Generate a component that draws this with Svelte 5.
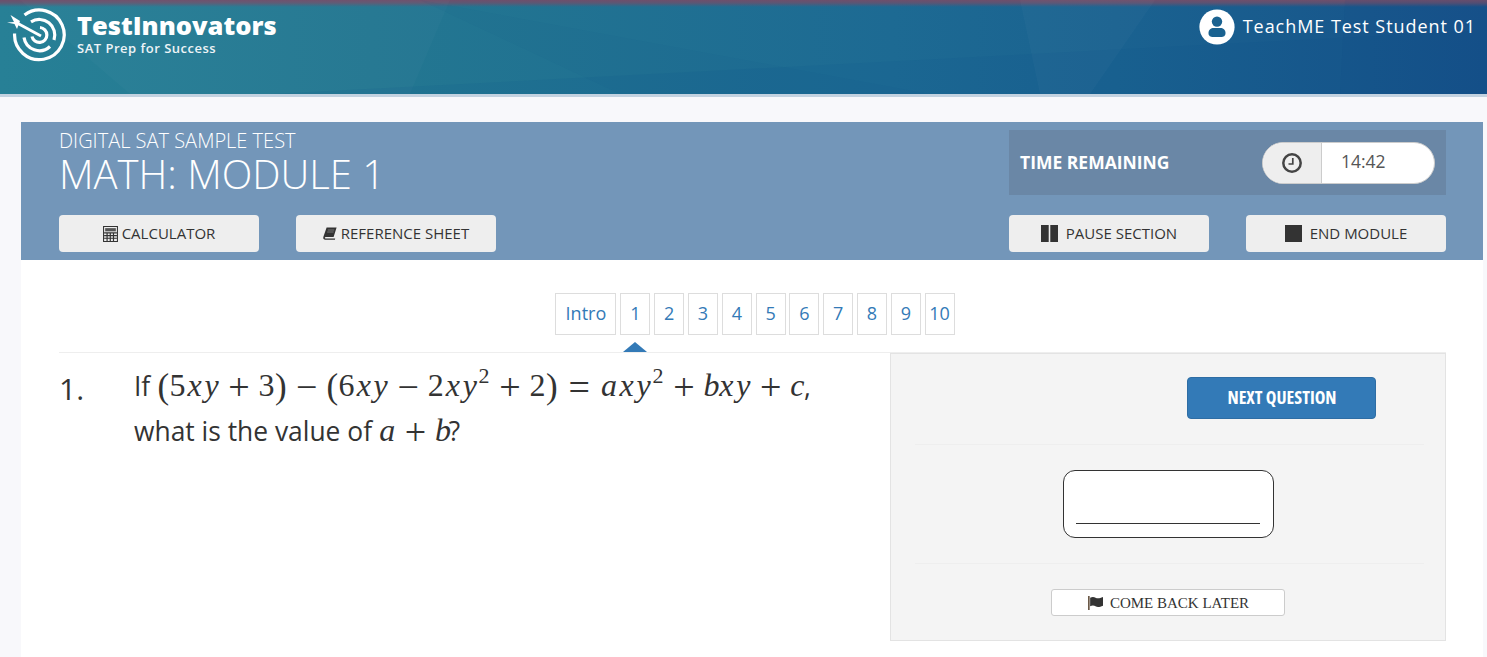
<script>
  const tabs = ['1','2','3','4','5','6','7','8','9','10'];
  const X = { t: 'x', w: .572, k: 'mi' };
  const Y = { t: 'y', w: .49, k: 'mi' };
  const num = (t) => ({ t, w: .5, k: 'mn' });
  const par = (t) => ({ t, w: .389, k: 'mp' });
  const bin = (t) => ({ t, w: 1.222, k: 'mo' });
  const sq = { t: '2', w: .4, k: 'sup' };
  const mi = (t, w) => ({ t, w, k: 'mi' });
  const line1 = [par('('),num('5'),X,Y,bin('+'),num('3'),par(')'),bin('−'),par('('),num('6'),X,Y,bin('−'),num('2'),X,Y,sq,bin('+'),num('2'),par(')'),
    { t:'=', w:1.334, k:'mo' },mi('a',.529),X,Y,sq,bin('+'),mi('b',.429),X,Y,bin('+'),mi('c',.433)];
  const line2 = [mi('a',.529),bin('+'),mi('b',.429)];
  const EM = 32;
</script>

{#snippet math(tokens)}
  <span class="math">{#each tokens as tok}<span class={tok.k} style="width:{tok.w * EM}px">{tok.t}</span>{/each}</span>
{/snippet}

<div class="page">
  <header class="top">
    <svg class="facets" viewBox="0 0 1487 94" preserveAspectRatio="none" aria-hidden="true">
      <polygon points="20,0 130,94 410,94 450,0" fill="#fff" opacity=".02"/>
      <polygon points="270,94 1487,30 1487,94" fill="#0b4f8c" opacity=".1"/>
      <polygon points="1020,0 1040,94 1090,94 1155,0" fill="#fff" opacity=".025"/>
      <polygon points="420,0 620,94 930,94" fill="#0b4f8c" opacity=".05"/>
      <polygon points="1345,0 1487,0 1487,94 1340,94" fill="#0d3f80" opacity=".08"/>
    </svg>
    <div class="brand">
      <svg class="logo" viewBox="7 7 62 62" aria-hidden="true">
        <g fill="none" stroke="#fff" stroke-width="3.2">
          <path d="M24.5 15 A24.8 24.8 0 1 1 14.6 33.5"/>
          <path d="M31 21.8 A15.6 15.6 0 0 1 54 40"/>
          <path d="M24 37.5 A15.6 15.6 0 0 0 50 46.5"/>
          <path d="M40 27.5 A7.5 7.5 0 1 1 32 36.5"/>
        </g>
        <path d="M17 23 L41 36" stroke="#fff" stroke-width="2.8" fill="none"/>
        <path d="M6.5 22.5 L14 22 L10.5 15 L20 21 L17 29 L14.5 24 Z" fill="#fff"/>
      </svg>
      <div class="brand-text">
        <div class="brand-name">TestInnovators</div>
        <div class="brand-sub">SAT Prep for Success</div>
      </div>
    </div>
    <div class="user">
      <svg class="avatar" viewBox="0 0 36 36" aria-hidden="true">
        <circle cx="18" cy="18" r="17.6" fill="#fff"/>
        <circle cx="18" cy="12.6" r="5.2" fill="#1a6290"/>
        <path d="M9.5 24 C9.5 20.5 12 19 14.5 19 H21.5 C24 19 26.5 20.5 26.5 24 C26.5 27 24.5 28 22 28 H14 C11.5 28 9.5 27 9.5 24 Z" fill="#1a6290"/>
      </svg>
      <span class="user-name">TeachME Test Student 01</span>
    </div>
  </header>

  <main class="main">
    <section class="card">
      <div class="head">
        <div class="head-row first">
          <div class="titles">
            <div class="eyebrow">DIGITAL SAT SAMPLE TEST</div>
            <h1>MATH: MODULE 1</h1>
          </div>
          <div class="timer">
            <strong>TIME REMAINING</strong>
            <div class="pill">
              <span class="pill-icon">
                <svg viewBox="0 0 20 20" width="20" height="20" aria-hidden="true">
                  <circle cx="10" cy="10" r="8.7" fill="none" stroke="#444" stroke-width="2.5"/>
                  <path d="M10.8 5 V11 H6.5" fill="none" stroke="#444" stroke-width="1.7"/>
                </svg>
              </span>
              <span class="pill-time">14:42</span>
            </div>
          </div>
        </div>
        <div class="head-row">
          <div class="btns">
            <button class="tool">
              <svg viewBox="0 0 14 15" width="15" height="16" aria-hidden="true">
                <path d="M.5.5h13v14H.5z" fill="none" stroke="#333"/>
                <path d="M2 2h10v3H2z" fill="#555"/>
                <path d="M1 6.5h12M1 9h12M1 11.5h12M3.8 6v8M6.8 6v8M9.8 6v8" stroke="#333" stroke-width="1.1"/>
              </svg>
              CALCULATOR
            </button>
            <button class="tool">
              <svg viewBox="0 0 14 13" width="14" height="13" aria-hidden="true">
                <path d="M3.6.5H13.6L10.6 10H2.8C1.6 10 1.4 11.6 2.6 11.6H12.2L11.9 12.7H2C.3 12.7 0 11 .4 9.8Z" fill="#333"/>
                <path d="M4.8 3h6.4M4.2 5h6.4" stroke="#888" stroke-width=".8"/>
              </svg>
              REFERENCE SHEET
            </button>
          </div>
          <div class="btns">
            <button class="tool big">
              <svg viewBox="0 0 17 17" width="17" height="17" aria-hidden="true"><path d="M0 0h7.7v17H0zM9.3 0h7.7v17H9.3z" fill="#333"/></svg>
              PAUSE SECTION
            </button>
            <button class="tool big">
              <svg viewBox="0 0 17 17" width="17" height="17" aria-hidden="true"><path d="M0 0h17v17H0z" fill="#333"/></svg>
              END MODULE
            </button>
          </div>
        </div>
      </div>

      <nav class="tabs">
        <a class="tab intro" href="#intro">Intro</a>
        {#each tabs as t}
          <a class="tab" class:active={t === '1'} href="#q{t}">{t}</a>
        {/each}
      </nav>

      <div class="body">
        <div class="question">
          <div class="qnum">1.</div>
          <div class="qtext">
            <div class="qline">If {@render math(line1)},</div>
            <div class="qline">what is the value of {@render math(line2)}?</div>
          </div>
        </div>
        <aside class="panel">
          <div class="next-row"><button class="next">NEXT QUESTION</button></div>
          <hr />
          <div class="answer-row"><div class="answer"><div class="answer-line"></div></div></div>
          <hr />
          <div class="later-row">
            <button class="later">
              <svg viewBox="0 0 14 13" width="15" height="14" aria-hidden="true">
                <path d="M.8 0v13" stroke="#5a4632" stroke-width="1.4"/>
                <path d="M2 1.5C4 .5 6 .8 7 1.6 9 2.6 11 2.2 14 1V9C11 10.2 9 10.6 7 9.6 6 8.8 4 8.5 2 9.5Z" fill="#333"/>
              </svg>
              COME BACK LATER
            </button>
          </div>
        </aside>
      </div>
    </section>
  </main>
</div>

<style>
  :global(body) { margin: 0; background: #f8f8fb; overflow: hidden; }
  * { box-sizing: border-box; }
  .page { font-family: "Open Sans", sans-serif; color: #333; height: 657px; overflow: hidden; }

  .top {
    position: relative; height: 97px; display: flex; justify-content: space-between; align-items: flex-start;
    padding: 8px 11px 0 7px; color: #fff; border-bottom: 3px solid #c3d2e0;
    background:
      linear-gradient(180deg, #6f4f6b 0, rgba(111,79,107,.75) 3px, rgba(111,79,107,0) 7px),
      linear-gradient(90deg, #278096 0, #237791 25%, #1d6a93 60%, #1a6290 75%, #17528a 100%);
  }
  .facets { position: absolute; inset: 0; width: 100%; height: 94px; }
  .brand, .user { position: relative; display: flex; }
  .brand { gap: 8px; }
  .logo { width: 62px; height: 62px; margin-top: -1px; }
  .brand-name { font-size: 25.5px; font-weight: 800; line-height: 30px; margin-top: 2px; }
  .brand-sub { font-size: 13px; font-weight: 600; line-height: 15px; letter-spacing: .5px; margin-top: 1px; color: #eef4f7; }
  .user { align-items: center; gap: 8px; font-size: 18px; letter-spacing: .95px; height: 36px; margin-top: 1px; }
  .user-name { margin-top: -2px; }
  .avatar { width: 36px; height: 36px; }

  .main { padding: 25px 4px 0 21px; }
  .card { background: #fff; min-height: 560px; }
  .head { background: #7396b9; height: 138px; padding: 8px 37px 0 38px; }
  .head-row { display: flex; justify-content: space-between; }
  .first { height: 85px; }
  .titles { color: #fff; font-weight: 300; }
  .eyebrow { font-size: 20px; line-height: 22px; }
  h1 { margin: -1px 0 0; font-size: 40px; font-weight: 300; line-height: 45px; }
  .timer {
    width: 437px; height: 65px; background: #6a87a6; display: flex; align-items: center; justify-content: space-between;
    padding: 0 11px; color: #fff; font-size: 17.5px; line-height: 24px;
  }
  .timer strong { margin-top: -2px; }
  .pill { display: flex; width: 173px; height: 42px; border-radius: 21px; overflow: hidden; background: #fff; border: 1px solid #ccc; }
  .pill-icon { width: 59px; background: #eee; border-right: 1px solid #ccc; display: flex; align-items: center; justify-content: center; }
  .pill-time { padding-left: 19px; font-size: 17.5px; line-height: 37px; color: #555; }
  .btns { display: flex; gap: 37px; }
  .tool {
    width: 200px; height: 37px; background: #eee; border: 0; border-radius: 4px; font: 15px "Open Sans", sans-serif; color: #333;
    display: flex; align-items: center; justify-content: center; gap: 4px; padding: 0 0 2px;
  }
  .tool svg { margin-top: 2px; }
  .tool.big { gap: 8px; }

  .tabs { display: flex; justify-content: center; gap: 3.8px; padding: 33px 0 0; height: 92px; margin-left: 6px; }
  .tab {
    position: relative; width: 30px; height: 42px; border: 1px solid #ddd; color: #337ab7; text-decoration: none;
    font-size: 18px; line-height: 39px; text-align: center;
  }
  .intro { width: 61px; margin-right: .2px; }
  .active::after {
    content: ""; position: absolute; left: 2px; top: 48px; border: solid transparent; border-width: 0 12px 10px;
    border-bottom-color: #337ab7;
  }

  .body { margin: 0 37px 0 38px; border-top: 1px solid #eee; display: flex; justify-content: space-between; }
  .question { display: flex; flex: 1; padding-top: 11px; }
  .qnum { width: 75px; font-size: 30px; line-height: 50px; color: #333; }
  .qtext { font-size: 26.4px; color: #333; white-space: nowrap; }
  .qline { height: 45px; line-height: 45px; }
  .math { font-family: "Liberation Serif", serif; font-size: 32px; line-height: 1; }
  .math span { display: inline-block; text-align: center; line-height: 1; }
  .mi { font-style: italic; }
  .math .mo { font-size: 38px; line-height: 32px; vertical-align: -4px; }
  .math .mp { font-size: 35px; line-height: 32px; vertical-align: -2px; }
  .math .sup { font-size: 22px; line-height: 22px; vertical-align: 13px; }

  .panel { width: 556px; height: 288px; background: #f4f4f4; border: 1px solid #e3e3e3; padding: 0 21px 0 24px; }
  hr { margin: 0; border: 0; border-top: 1px solid #eee; }
  .next-row { display: flex; justify-content: flex-end; padding: 23px 48px 25px 0; }
  .next {
    width: 189px; height: 42px; background: #337ab7; border: 1px solid #2e6da4; border-radius: 4px; color: #fff;
    font: 700 18px "Open Sans", sans-serif; font-stretch: 75%; padding: 0 0 2px 1px;
  }
  .answer-row { display: flex; justify-content: center; padding: 25px 0; margin-right: 3px; }
  .answer { width: 211px; height: 68px; background: #fff; border: 1px solid #333; border-radius: 12px; padding: 52px 13px 0 12px; }
  .answer-line { border-top: 1px solid #333; }
  .later-row { display: flex; justify-content: center; padding-top: 25px; margin-right: 3px; }
  .later {
    width: 234px; height: 27px; background: #fff; border: 1px solid #ccc; border-radius: 3px; padding: 1px 0 0 1px;
    font: 15px "Liberation Serif", serif; color: #333; display: flex; align-items: center; justify-content: center; gap: 7px;
  }
</style>
